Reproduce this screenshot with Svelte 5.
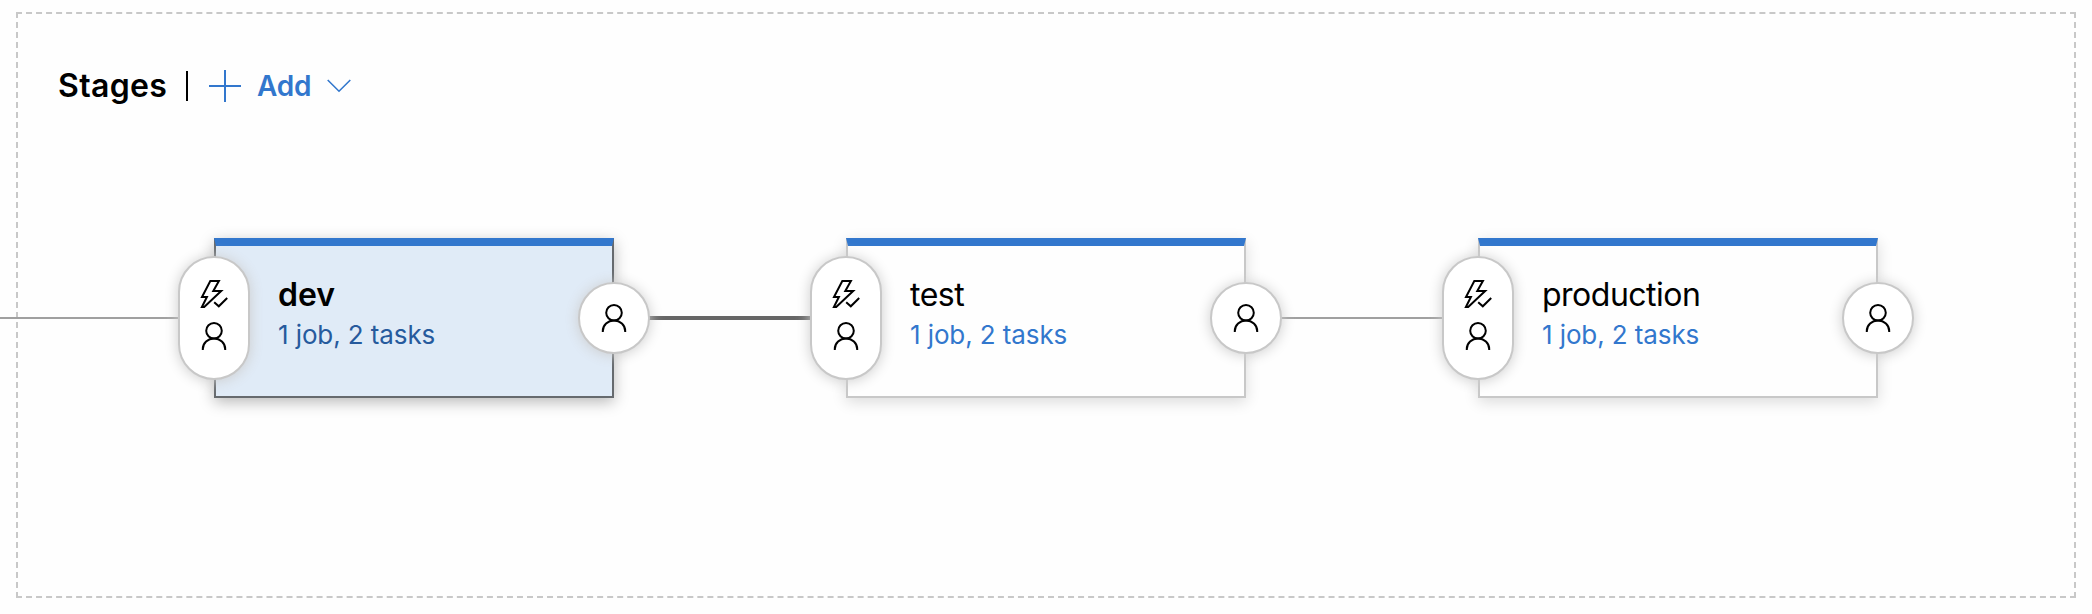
<script>
  const stages = [
    { name: 'dev', summary: '1 job, 2 tasks', selected: true, link: 'lead' },
    { name: 'test', summary: '1 job, 2 tasks', selected: false, link: 'strong' },
    { name: 'production', summary: '1 job, 2 tasks', selected: false, link: '' }
  ];
</script>

{#snippet person()}
  <svg class="icon" viewBox="0 0 28 28" width="28" height="28">
    <circle cx="14" cy="8.7" r="7.8" />
    <path d="M2.8 28v-1a11.2 10.6 0 0 1 22.4 0v1" />
  </svg>
{/snippet}

{#snippet trigger()}
  <svg class="icon" viewBox="0 0 28 28" width="28" height="28">
    <path d="M10.3 1H18.9L13.3 10.9H21.2L4.2 27H1.9L6.9 17H2L10.3 1Z" />
    <path d="M14.2 22.2L18.8 26.3L27.2 18" />
  </svg>
{/snippet}

<main class="frame">
  <header>
    <h1>Stages</h1>
    <span class="divider"></span>
    <button>
      <svg class="plus" viewBox="0 0 32 32" width="32" height="32"><path d="M16 0V32M0 16H32" /></svg>
      <span>Add</span>
      <svg class="chevron" viewBox="0 0 24 14" width="24" height="14"><path d="M.7 1L12 12.2L23.3 1" /></svg>
    </button>
  </header>

  <section class="pipeline">
    {#each stages as stage}
      <span class="link {stage.link}"></span>
      <article class:selected={stage.selected}>
        <div class="badge pre">{@render trigger()}{@render person()}</div>
        <h2>{stage.name}</h2>
        <a href="#tasks">{stage.summary}</a>
        <div class="badge post">{@render person()}</div>
      </article>
    {/each}
  </section>
</main>

<style>
  :global(body) {
    background: #fefefe;
  }
  .frame {
    box-sizing: border-box;
    width: 2060px;
    height: 586px;
    margin: 12px 0 0 16px;
    border: 2px dashed #c8c8c8;
    font-family: Inter, 'Liberation Sans', sans-serif;
    color: #000;
  }
  header {
    display: flex;
    align-items: center;
    height: 48px;
    margin: 48px 0 0 40px;
  }
  h1 {
    width: 108px;
    margin: 0;
    font-size: 32px;
    font-weight: 600;
    letter-spacing: 0.35px;
    line-height: 48px;
    white-space: nowrap;
  }
  .divider {
    width: 2px;
    height: 30px;
    margin-left: 20px;
    background: #000;
  }
  button {
    display: flex;
    align-items: center;
    margin-left: 21px;
    padding: 0;
    border: 0;
    background: none;
    color: #3277cd;
    font: 600 28px/48px Inter, 'Liberation Sans', sans-serif;
  }
  button span {
    width: 54px;
    margin-left: 16px;
    letter-spacing: -0.2px;
    text-align: left;
  }
  svg {
    display: block;
    flex: none;
    overflow: visible;
    fill: none;
  }
  .plus {
    stroke: #3277cd;
    stroke-width: 2;
  }
  .chevron {
    margin-left: 16px;
    stroke: #3277cd;
    stroke-width: 1.6;
  }
  .pipeline {
    display: flex;
    align-items: center;
    height: 160px;
    margin: 128px 0 0 -18px;
  }
  .link {
    flex: none;
    width: 232px;
    height: 2px;
    background: #a0a0a0;
  }
  .link.lead {
    width: 214px;
  }
  .link.strong {
    height: 4px;
    background: #666;
  }
  article {
    position: relative;
    box-sizing: border-box;
    flex: none;
    width: 400px;
    height: 160px;
    padding: 28px 0 0 62px;
    border: 2px solid #c8c8c8;
    border-top: 8px solid #3277cd;
    background: #fefefe;
    box-shadow: 0 4px 14px rgba(0, 0, 0, 0.14);
  }
  article.selected {
    border-color: #3277cd #666a6e #666a6e;
    background: #e0ebf7;
    box-shadow: 0 4px 14px rgba(0, 0, 0, 0.28);
  }
  h2 {
    margin: 0;
    font-size: 32px;
    font-weight: 400;
    letter-spacing: -0.5px;
    line-height: 42px;
  }
  .selected h2 {
    font-weight: 600;
    letter-spacing: 0;
  }
  a {
    display: block;
    color: #3277cd;
    font-size: 26px;
    letter-spacing: -0.1px;
    line-height: 38px;
    text-decoration: none;
  }
  .selected a {
    color: #265a9d;
  }
  .badge {
    position: absolute;
    box-sizing: border-box;
    display: flex;
    flex-direction: column;
    align-items: center;
    justify-content: center;
    gap: 14px;
    width: 72px;
    border: 2px solid #c8c8c8;
    border-radius: 36px;
    background: #fff;
    box-shadow: 0 1px 14px #cdcdcd;
  }
  .pre {
    left: -38px;
    top: 10px;
    height: 124px;
    padding-bottom: 6px;
  }
  .post {
    right: -38px;
    top: 36px;
    height: 72px;
  }
  .icon {
    stroke: #000;
    stroke-width: 2;
  }
</style>
